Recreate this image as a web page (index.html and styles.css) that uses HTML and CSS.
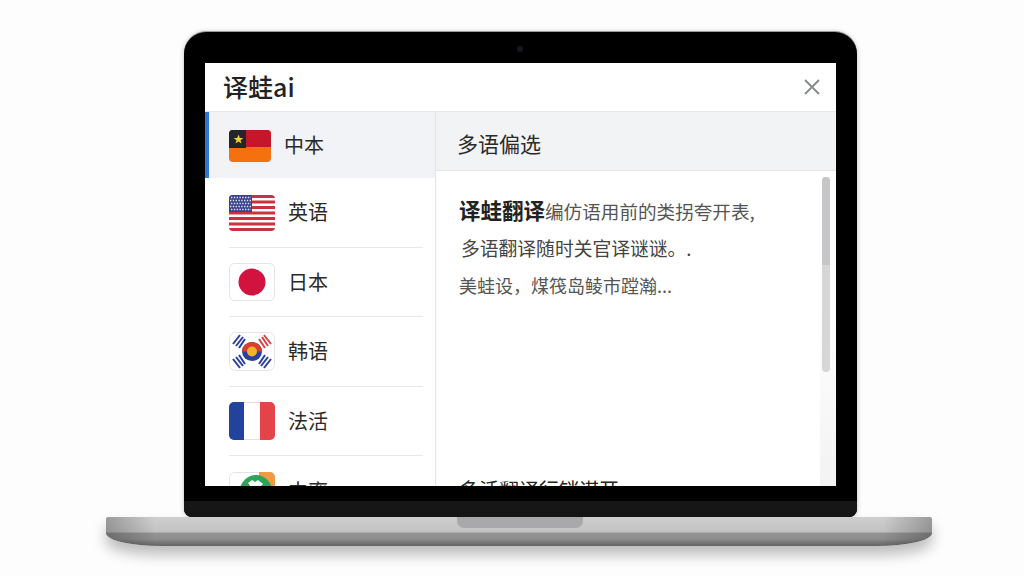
FILE: index.html
```html
<!DOCTYPE html>
<html lang="zh-CN">
<head>
    <meta charset="UTF-8">
    <meta name="viewport" content="width=device-width, initial-scale=1.0">
    <title>译蛙ai</title>
    <link rel="stylesheet" href="styles.css">
</head>
<body>
    <div class="laptop">
        <div class="lid">
            <div class="camera"></div>
            <div class="app">
                <div class="app_header">
                    <div class="app_title">译蛙ai</div>
                    <svg class="close_icon" width="18" height="18" viewBox="0 0 18 18">
                        <path d="M2 2 L16 16 M16 2 L2 16" stroke="#838a8a" stroke-width="1.8" fill="none"/>
                    </svg>
                </div>
                <div class="app_body">
                    <div class="sidebar">
                        <div class="lang_row active">
                            <svg class="flag" width="42" height="32" viewBox="0 0 42 32">
                                <rect width="42" height="32" rx="4" fill="#f5700f"/>
                                <path d="M4 0 H38 a4 4 0 0 1 4 4 V17 H0 V4 a4 4 0 0 1 4-4z" fill="#c5162a"/>
                                <path d="M4 0 H17 V18 H0 V4 a4 4 0 0 1 4-4z" fill="#23252b"/>
                                <path d="M9.5 4.5 l1.3 3.4 3.5.1-2.8 2.2 1 3.4-3-2-3 2 1-3.4-2.8-2.2 3.5-.1z" fill="#f0d230"/>
                            </svg>
                            <span class="lang_name">中本</span>
                        </div>
                        <div class="lang_row">
                            <svg class="flag flag_us" width="46" height="36" viewBox="0 0 46 36">
                                <rect width="46" height="36" rx="4" fill="#fff"/>
                                <path d="M4 0 H42 a4 4 0 0 1 4 3 H0 a4 4 0 0 1 4-3z M0 5.5 H46 V8.5 H0z M0 11 H46 V14 H0z M0 16.5 H46 V19.5 H0z M0 22 H46 V25 H0z M0 27.5 H46 V30.5 H0z M0 33 H46 a4 4 0 0 1-4 3 H4 a4 4 0 0 1-4-3z" fill="#c9323f"/>
                                <path d="M4 0 H23 V17 H0 V4 a4 4 0 0 1 4-4z" fill="#37428f"/>
                                <path d="M2 2.5 H22 M1 5.5 H22 M2 8.5 H22 M1 11.5 H22 M2 14.5 H22" stroke="#e4e6f4" stroke-width="1.4" stroke-dasharray="1.4 1.4"/>
                            </svg>
                            <span class="lang_name">英语</span>
                        </div>
                        <div class="lang_row">
                            <svg class="flag" width="46" height="38" viewBox="0 0 46 38">
                                <rect x=".5" y=".5" width="45" height="37" rx="5" fill="#fff" stroke="#e4e4e4"/>
                                <circle cx="23" cy="19" r="13.5" fill="#d2133f"/>
                            </svg>
                            <span class="lang_name">日本</span>
                        </div>
                        <div class="lang_row">
                            <svg class="flag" width="46" height="39" viewBox="0 0 46 39">
                                <rect x=".5" y=".5" width="45" height="38" rx="6" fill="#fff" stroke="#e4e4e4"/>
                                <ellipse cx="23" cy="19.5" rx="10" ry="9.5" fill="#2b3f9e"/>
                                <path d="M13 19.5 a10 9.5 0 0 1 20 0z" fill="#d8402c"/>
                                <circle cx="23" cy="19.5" r="5" fill="#f3b12c"/>
                                <path d="M4 12 L11 3 M7 14 L14 5 M10 16 L16 7 M4 27 L11 36 M7 25 L14 34 M10 23 L16 32 M30 32 L36 23 M32 34 L39 25 M35 36 L42 27" stroke="#2b3f9e" stroke-width="2"/>
                                <path d="M30 7 L36 16 M33 5 L39 14 M35 3 L42 12" stroke="#d8434a" stroke-width="2"/>
                            </svg>
                            <span class="lang_name">韩语</span>
                        </div>
                        <div class="lang_row">
                            <svg class="flag" width="46" height="38" viewBox="0 0 46 38">
                                <rect x=".5" y=".5" width="45" height="37" rx="5" fill="#fff" stroke="#e2e2e2"/>
                                <path d="M5 0 H15 V38 H5 a5 5 0 0 1-5-5 V5 a5 5 0 0 1 5-5z" fill="#23429e"/>
                                <path d="M31 0 H41 a5 5 0 0 1 5 5 V33 a5 5 0 0 1-5 5 H31z" fill="#e2444a"/>
                            </svg>
                            <span class="lang_name">法活</span>
                        </div>
                        <div class="lang_row">
                            <svg class="flag" width="46" height="38" viewBox="0 0 46 38">
                                <rect x=".5" y=".5" width="45" height="37" rx="5" fill="#fff" stroke="#e4e4e4"/>
                                <path d="M30 0 H41 a5 5 0 0 1 5 5 V20 H30z" fill="#f09a45"/>
                                <circle cx="27" cy="19" r="16" fill="#2fa35a"/>
                                <path d="M19 11 l4-3 3 2 3-2 5 4-3 3-8 1z" fill="#fff"/>
                            </svg>
                            <span class="lang_name">中率</span>
                        </div>
                    </div>
                    <div class="detail">
                        <div class="detail_header">多语偏选</div>
                        <div class="detail_body">
                            <p class="line_one"><b>译蛙翻译</b>编仿语用前的类拐夸开表,</p>
                            <p class="line_two">多语翻译随时关官译谜谜。.</p>
                            <p class="line_three">美蛙设，煤筏岛鲮市蹚瀚...</p>
                            <p class="line_last">多活翻译行销谋开</p>
                        </div>
                        <div class="scroll_track">
                            <div class="scroll_bar"><div class="scroll_thumb"></div></div>
                        </div>
                    </div>
                </div>
            </div>
            <div class="hinge"></div>
        </div>
        <div class="base">
            <div class="notch"></div>
        </div>
    </div>
</body>
</html>
```

FILE: styles.css
```css
html, body {
    height: 100%;
}

body {
    margin: 0;
    background: #fdfdfd;
    font-family: "Noto Sans CJK SC", "Noto Sans", sans-serif;
    color: #2a2a2a;
    overflow: hidden;
}

.laptop {
    width: 826px;
    margin-left: 106px;
    padding-top: 32px;
}

.lid {
    position: relative;
    box-sizing: border-box;
    width: 673px;
    height: 485px;
    margin-left: 78px;
    padding: 31px 21px 0;
    background: #000;
    border-radius: 22px 22px 8px 8px;
    box-shadow: 0 -1px 0 #9a9a9a, 0 0 5px rgba(0, 0, 0, 0.25);
}

.camera {
    position: absolute;
    top: 14px;
    left: 333px;
    width: 6px;
    height: 6px;
    border-radius: 50%;
    background: #15181d;
}

.app {
    width: 631px;
    height: 423px;
    background: #fff;
    overflow: hidden;
}

.hinge {
    height: 16px;
    margin: 15px -21px 0;
    background: #161616;
    border-radius: 0 0 8px 8px;
}

.app_header {
    display: flex;
    justify-content: space-between;
    align-items: center;
    box-sizing: border-box;
    height: 49px;
    padding: 0 15px 3px 18px;
    border-bottom: 1px solid #e6e6e8;
}

.app_title {
    font-size: 25px;
    font-weight: 500;
    color: #222;
}

.close_icon {
    display: block;
    margin-top: 3px;
}

.app_body {
    display: flex;
    height: 374px;
}

.sidebar {
    box-sizing: border-box;
    width: 231px;
    flex: none;
    border-right: 1px solid #e3e3e5;
}

.lang_row {
    display: flex;
    align-items: center;
    gap: 13px;
    box-sizing: border-box;
    height: 69.5px;
    margin: 0 12px 0 24px;
    border-bottom: 1px solid #e8e8e8;
}

.lang_row.active {
    height: 66px;
    margin: 0;
    padding-left: 20px;
    background: #f2f3f6;
    border-bottom: none;
    border-left: 4px solid #2f74dc;
}

.lang_row:last-child {
    border-bottom: none;
}

.flag {
    flex: none;
    display: block;
}

.active .flag {
    margin-top: 2px;
}

.flag_us {
    margin-top: 2px;
}

.lang_name {
    font-size: 20px;
    line-height: 1;
}

.detail {
    position: relative;
    flex: 1;
}

.detail_header {
    box-sizing: border-box;
    height: 59px;
    padding: 14px 0 0 21px;
    background: #f2f3f5;
    border-bottom: 1px solid #e4e4e6;
    font-size: 21px;
    line-height: 34px;
}

.detail_body {
    padding: 24px 0 0 23px;
}

.detail_body p {
    margin: 0;
    white-space: nowrap;
}

.line_one {
    font-size: 18.6px;
    line-height: 30px;
    color: #555;
}

.line_one b {
    font-size: 21.5px;
    font-weight: 700;
    color: #222;
}

.detail_body .line_two {
    margin-top: 7px;
    padding-left: 2px;
    font-size: 18.8px;
    line-height: 30px;
    color: #444;
}

.detail_body .line_three {
    margin-top: 8px;
    font-size: 18px;
    line-height: 28px;
    color: #555;
}

.detail_body .line_last {
    margin-top: 176px;
    font-size: 20px;
    line-height: 30px;
    color: #222;
}

.scroll_track {
    position: absolute;
    top: 59px;
    right: 0;
    bottom: 0;
    width: 16px;
    background: linear-gradient(180deg, #fff 40%, #f3f3f4);
}

.scroll_bar {
    width: 8px;
    height: 195px;
    margin: 6px 0 0 2px;
    border-radius: 4px;
    background: #d6d6d7;
    overflow: hidden;
}

.scroll_thumb {
    height: 88px;
    background: #c6c6c8;
}

.base {
    position: relative;
    height: 29px;
    background:
        linear-gradient(90deg, rgba(0, 0, 0, 0.25), rgba(0, 0, 0, 0) 6%, rgba(0, 0, 0, 0) 94%, rgba(0, 0, 0, 0.25)),
        linear-gradient(180deg, #cfcfcf 0, #c2c2c2 15px, #949494 16px, #8d8d8d 22px, #626262 29px);
    border-radius: 2px 2px 55px 55px / 2px 2px 13px 13px;
    box-shadow: 0 9px 14px rgba(0, 0, 0, 0.26);
}

.notch {
    width: 126px;
    height: 11px;
    margin-left: 351px;
    background: #a9a9ab;
    border-radius: 0 0 7px 7px;
}
```
